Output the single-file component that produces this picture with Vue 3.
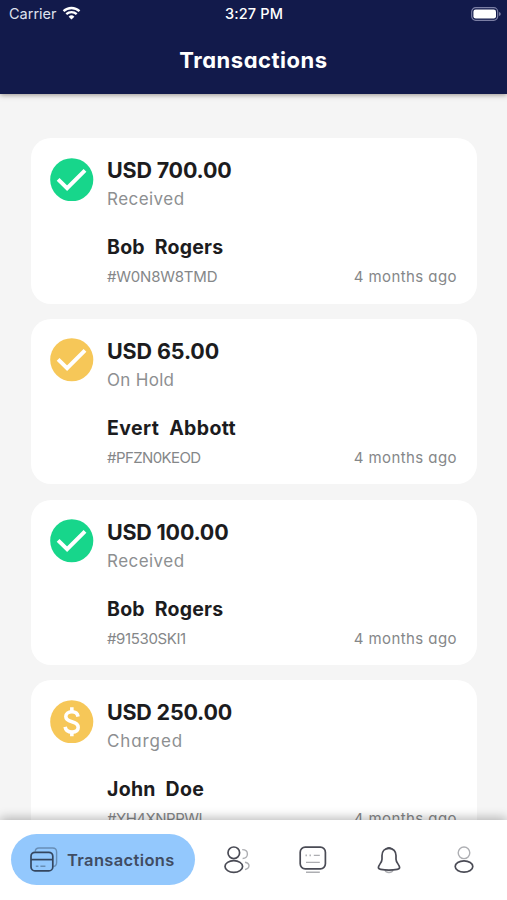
<script setup>
// tracking: letter-spacing in px for the amount, status, name and code lines
const transactions = [
  { amount: 'USD 700.00', status: 'Received', name: 'Bob  Rogers', code: '#W0N8W8TMD', icon: 'check', tone: 'green', tracking: [-0.2, 0.45, 0.25, -0.22] },
  { amount: 'USD 65.00', status: 'On Hold', name: 'Evert  Abbott', code: '#PFZN0KEOD', icon: 'check', tone: 'amber', tracking: [-0.12, 0.3, 0.38, -0.6] },
  { amount: 'USD 100.00', status: 'Received', name: 'Bob  Rogers', code: '#91530SKI1', icon: 'check', tone: 'green', tracking: [-0.22, 0.45, 0.25, -0.38] },
  { amount: 'USD 250.00', status: 'Charged', name: 'John  Doe', code: '#YH4XNPPWL', icon: 'dollar', tone: 'amber', tracking: [-0.22, 0.9, 0.28, -0.5] },
]

const spacing = (px) => ({ letterSpacing: `${px}px` })
</script>

<template>
  <div class="screen">
    <header class="header">
      <div class="status-bar">
        <div class="carrier">
          <span>Carrier</span>
          <svg class="wifi" viewBox="0 0 18 14">
            <path d="M1 5.2a11.6 11.6 0 0 1 16 0" />
            <path d="M3.8 8.1a7.6 7.6 0 0 1 10.4 0" />
            <path class="wifi-dot" d="M9 13.6 6.1 10.7a4.1 4.1 0 0 1 5.8 0z" />
          </svg>
        </div>
        <div class="clock">3:27 PM</div>
        <svg class="battery" viewBox="0 0 30 14">
          <rect class="battery-frame" x="0.7" y="0.7" width="26" height="12.6" rx="4" />
          <rect class="battery-level" x="2.4" y="2.4" width="22.6" height="9.2" rx="2.3" />
          <path class="battery-cap" d="M28 5q1.8.5 1.8 2T28 9z" />
        </svg>
      </div>
      <h1 class="title">Transactions</h1>
    </header>

    <main class="list">
      <article v-for="t in transactions" :key="t.code" class="card">
        <svg class="badge" :class="t.tone" viewBox="0 0 44 44">
          <circle cx="22" cy="22" r="21.8" />
          <path v-if="t.icon === 'check'" class="check" d="M8.2 21.6 17.3 30.6 35.4 12.6" />
          <g v-else class="dollar">
            <path d="M28.4 16.8C27.9 13.6 25.5 11.9 22.1 11.9C18.500 11.900 16 13.700 16 16.800C16 19.700 18 20.900 22.200 22C26.600 23.200 28.500 24.600 28.500 27.600C28.500 30.700 26.200 32.500 22.300 32.500C18.300 32.500 15.800 30.500 15.300 27.200" />
            <path d="M22.100 7.400V11.900M22.100 32.500V36.600" />
          </g>
        </svg>
        <div class="details">
          <div class="amount" :style="spacing(t.tracking[0])">{{ t.amount }}</div>
          <div class="state" :style="spacing(t.tracking[1])">{{ t.status }}</div>
          <div class="name" :style="spacing(t.tracking[2])">{{ t.name }}</div>
          <div class="meta">
            <span class="code" :style="spacing(t.tracking[3])">{{ t.code }}</span>
            <span class="age">4 months ago</span>
          </div>
        </div>
      </article>
    </main>

    <nav class="tabs">
      <a class="tab active">
        <svg class="cards-icon" viewBox="0 0 28 26">
          <path class="faint" d="M5.2 4.5C5.4 2.2 6.8 1 9 1h13.6c2.7 0 4 1.5 4 4v10.6c0 2.2-1.2 3.7-3.2 3.9" />
          <rect x="1" y="5.3" width="21.8" height="18.6" rx="4" />
          <path d="M1 12.6h21.8" />
          <path class="faint" d="M5.8 19.2h2.6M10.4 19.2h5" />
        </svg>
        <span>Transactions</span>
      </a>
      <a class="tab">
        <svg class="people" viewBox="0 0 28 28">
          <circle cx="10.8" cy="6.800" r="5.800" />
          <ellipse cx="10.800" cy="20.500" rx="8.800" ry="5.800" />
          <path class="faint" d="M19.200 3.600c3.200 0 5.200 1.800 5.200 4.400s-1.900 4.500-4.800 4.500M22 16.200c2.600.5 4 1.800 4 3.600 0 1.900-1.400 3.200-4 3.800" />
        </svg>
      </a>
      <a class="tab">
        <svg class="monitor" viewBox="0 0 28 28">
          <rect x="1.200" y="1.200" width="25.200" height="21.600" rx="5" />
          <path class="faint" d="M7.200 8.600v1.600M11.200 8.600v1.600M14.800 9.400h6M7 16.400h13.800M7 26.200h13.800" />
        </svg>
      </a>
      <a class="tab">
        <svg class="bell" viewBox="0 0 24 28">
          <path class="faint" d="M8 24.300c1.200 3 6.800 3 8 0" />
          <path d="M12 2.300C7.600 2.300 5 5.400 5 9.600v3.600c0 3.500-3.600 5.600-3.600 8.400 0 1.100.9 1.600 2.300 1.800 5.200.8 11.400.8 16.600 0 1.400-.2 2.300-.7 2.300-1.800 0-2.800-3.600-4.900-3.600-8.400V9.600c0-4.200-2.600-7.300-7-7.300z" />
          <path class="bell-tip" d="M8.400 3.400C10 .3 14 .3 15.600 3.400 13 2.900 11 2.900 8.400 3.400z" />
        </svg>
      </a>
      <a class="tab">
        <svg class="person" viewBox="0 0 22 28">
          <circle class="faint" cx="11" cy="6.800" r="5.800" />
          <ellipse cx="11" cy="20.500" rx="8.800" ry="5.600" />
        </svg>
      </a>
    </nav>
  </div>
</template>

<style>
body {
  margin: 0;
  overflow: hidden;
}
</style>

<style scoped>
.screen {
  display: flex;
  flex-direction: column;
  width: 507px;
  height: 900px;
  overflow: hidden;
  background: #f5f5f5;
  font-family: Inter, "Open Sans", sans-serif;
  font-feature-settings: "cv11";
  color: #1c1c1e;
}

.header {
  flex: none;
  height: 94px;
  background: #121a4b;
  color: #fff;
  box-shadow: 0 1px 5px rgba(60, 45, 35, 0.5);
}

.status-bar {
  display: grid;
  grid-template-columns: 1fr auto 1fr;
  align-items: center;
  height: 28px;
  padding: 0 6px 0 9px;
  font-size: 14.5px;
  line-height: 28px;
  font-feature-settings: normal;
}

.carrier {
  display: flex;
  align-items: center;
  gap: 5px;
  color: #dfe2ee;
}

.clock {
  margin-right: 2px;
  font-weight: 500;
  letter-spacing: 0.15px;
}

.wifi {
  width: 19px;
  height: 14px;
  margin-top: -2px;
  fill: none;
  stroke: #fff;
  stroke-width: 2.3;
}

.wifi-dot {
  fill: #fff;
  stroke: none;
}

.battery {
  justify-self: end;
  width: 30px;
  height: 14px;
  margin-top: -1px;
}

.battery-frame {
  fill: none;
  stroke: #7b7fa4;
  stroke-width: 1.2;
}

.battery-level {
  fill: #fff;
}

.battery-cap {
  fill: #7b7fa4;
}

.title {
  margin: 17px 0 0;
  text-align: center;
  font-size: 22px;
  line-height: 30px;
  font-weight: 700;
  letter-spacing: 0.52px;
}

.list {
  flex: 1;
  min-height: 0;
  display: flex;
  flex-direction: column;
  gap: 15.3px;
  padding: 44px 30px 0 30.5px;
  overflow: hidden;
}

.card {
  flex: none;
  display: flex;
  gap: 13.5px;
  box-sizing: border-box;
  height: 165.5px;
  padding: 17px 20px 0 19.5px;
  border-radius: 20px;
  background: #fff;
}

.badge {
  flex: none;
  width: 43.5px;
  height: 43.5px;
  margin-top: 2.5px;
}

.green {
  fill: #17d68b;
}

.amber {
  fill: #f6c758;
}

.check {
  fill: none;
  stroke: #fff;
  stroke-width: 4;
}

.dollar {
  fill: none;
  stroke: #fff;
  stroke-width: 3.6;
}

.details {
  flex: 1;
  white-space: pre;
}

.amount {
  font-size: 21.5px;
  line-height: 30px;
  font-weight: 700;
}

.state {
  font-size: 17px;
  line-height: 28px;
  color: #8d8f91;
}

.name {
  margin-top: 21px;
  font-size: 19.5px;
  line-height: 26px;
  font-weight: 700;
}

.meta {
  display: flex;
  justify-content: space-between;
  margin-top: 5px;
  font-size: 15px;
  line-height: 24px;
  color: #858789;
}

.age {
  letter-spacing: 0.42px;
}

.tabs {
  flex: none;
  display: flex;
  align-items: center;
  box-sizing: border-box;
  height: 80px;
  padding: 0 5px 1px 11px;
  background: #fff;
  box-shadow: 0 -2px 10px rgba(0, 0, 0, 0.28);
  z-index: 1;
}

.tab {
  flex: 1;
  display: flex;
  align-items: center;
  justify-content: center;
}

.tab.active {
  flex: none;
  box-sizing: border-box;
  width: 184px;
  height: 51px;
  margin-right: 4px;
  padding-left: 19px;
  justify-content: flex-start;
  gap: 9px;
  border-radius: 26px;
  background: #93c8fd;
  color: #3f4c62;
  font-size: 16.5px;
  font-weight: 600;
  letter-spacing: 0.36px;
  font-feature-settings: normal;
}

.tab svg {
  height: 28px;
  fill: none;
  stroke: #4a4b55;
  stroke-width: 1.7;
}

.tab .cards-icon {
  width: 28px;
  height: 26px;
  stroke: #34465f;
}

.tab .faint {
  stroke-width: 1.4;
  opacity: 0.45;
}

.tab .bell-tip {
  fill: #4a4b55;
  stroke: none;
}

.people,
.monitor {
  width: 28px;
}

.bell {
  width: 24px;
  margin-left: 2px;
}

.person {
  width: 22px;
}
</style>
